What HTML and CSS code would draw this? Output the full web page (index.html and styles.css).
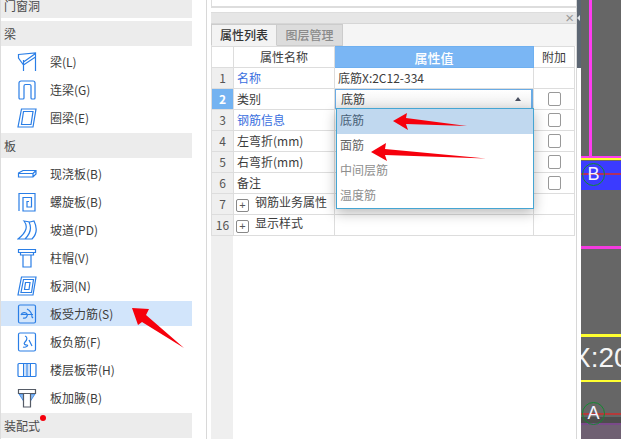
FILE: index.html
```html
<!DOCTYPE html>
<html lang="zh-CN">
<head>
<meta charset="utf-8">
<title>属性列表</title>
<link rel="stylesheet" href="styles.css">
</head>
<body>
<div class="app">
  <aside class="sidebar">
    <div class="group-head clipped">门窗洞</div>
    <div class="group-head">梁</div>
    <div class="item"><svg class="ico" viewBox="0 0 20 20"><path d="M1.500 2.500 18.500 1v4L6.500 13 1.500 6zM18.500 1.500 6.500 10M6.500 8v11M18.500 5v14"/></svg><span>梁(L)</span></div>
    <div class="item"><svg class="ico" viewBox="0 0 20 20"><path d="M3 19a1 1 0 0 1-1-1V3a2 2 0 0 1 2-2h12a2 2 0 0 1 2 2v15a1 1 0 0 1-1 1h-2a1 1 0 0 1-1-1V6a1.500 1.500 0 0 0-1.500-1.500h-4A1.500 1.500 0 0 0 7 6v12a1 1 0 0 1-1 1z"/></svg><span>连梁(G)</span></div>
    <div class="item"><svg class="ico" viewBox="0 0 20 20"><path d="M4.500 1H19l-3 18H1zM6.500 3.500H16l-2 13H4.500z"/></svg><span>圈梁(E)</span></div>
    <div class="group-head">板</div>
    <div class="item"><svg class="ico" viewBox="0 0 20 20"><path d="M1.500 9 6 6.500h13V10l-3 3H1.500zM1.500 9.500H16V13M16 9.500l3-3"/></svg><span>现浇板(B)</span></div>
    <div class="item"><svg class="ico" viewBox="0 0 20 20"><path d="M2 19V1.500h16V19H6V5.500h8.500V15H10V9.500h2"/></svg><span>螺旋板(B)</span></div>
    <div class="item"><svg class="ico" viewBox="0 0 20 20"><path d="M7 1c4 5 3 11-6 18h14c5-5 5-12 2-18l-4 1zM12 2c3 6 1 12-4 17"/></svg><span>坡道(PD)</span></div>
    <div class="item"><svg class="ico" viewBox="0 0 20 20"><path d="M1.500 1.500h17v3h-17zM3.500 4.500v2.500h13V4.500M6 7v12h8V7"/></svg><span>柱帽(V)</span></div>
    <div class="item"><svg class="ico" viewBox="0 0 20 20"><path d="M4.500 1H19l-3 18H1zM6.500 3.500H16.500l-2 13H4zM8.500 6.500h4.500l-1 7H7.500z"/></svg><span>板洞(N)</span></div>
    <div class="item active"><svg class="ico" viewBox="0 0 20 20"><rect x="1.500" y="1" width="17" height="18" rx="1.500"/><path d="M4 11c1-3 5-3 6-1s-1 5-4 4M4 10.500h12M10 5c2 1 5 4 5 8l1 1"/></svg><span>板受力筋(S)</span></div>
    <div class="item"><svg class="ico" viewBox="0 0 20 20"><rect x="1.500" y="1" width="17" height="18" rx="1.500"/><path d="M8 4c3 1 2 4 0 6s0 3 2 3-1 3-4 2M12 8c1 2 2 4 3 6"/></svg><span>板负筋(F)</span></div>
    <div class="item"><svg class="ico" viewBox="0 0 20 20"><rect class="tint" x="7" y="4" width="6" height="12"/><rect x="1" y="3.500" width="18" height="13" rx="1"/><path d="M6.500 3.500v13M13.500 3.500v13M10 4v12" class="dash"/></svg><span>楼层板带(H)</span></div>
    <div class="item"><svg class="ico" viewBox="0 0 20 20"><path class="tint2" d="M2 6h4.500v7zM18 6h-4.500v7z"/><path class="dark" d="M1.500 1.500h17v4h-17zM6.500 5.500V19h7V5.500"/></svg><span>板加腋(B)</span></div>
    <div class="group-head last">装配式<i class="dot"></i></div>
  </aside>

  <main class="panel">
    <div class="top-box"></div>
    <div class="title-bar"><span class="close">×</span></div>
    <div class="tabs">
      <div class="tab on">属性列表</div>
      <div class="tab">图层管理</div>
    </div>
    <div class="grid-wrap">
      <table class="grid">
        <colgroup><col class="c-i"><col class="c-n"><col class="c-v"><col class="c-a"></colgroup>
        <tr class="hd"><th class="idx blank"></th><th>属性名称</th><th class="val">属性值</th><th>附加</th></tr>
        <tr><td class="idx">1</td><td class="link">名称</td><td>底筋X:2C12-334</td><td></td></tr>
        <tr><td class="idx cur">2</td><td>类别</td>
          <td class="sel-cell">
            <div class="select"><span>底筋</span><i class="caret"></i></div>
            <ul class="menu">
              <li class="picked">底筋</li>
              <li>面筋</li>
              <li class="faint">中间层筋</li>
              <li class="faint">温度筋</li>
            </ul>
          </td>
          <td class="chk"><i class="box"></i></td></tr>
        <tr><td class="idx">3</td><td class="link">钢筋信息</td><td></td><td class="chk"><i class="box"></i></td></tr>
        <tr><td class="idx">4</td><td>左弯折(mm)</td><td></td><td class="chk"><i class="box"></i></td></tr>
        <tr><td class="idx">5</td><td>右弯折(mm)</td><td></td><td class="chk"><i class="box"></i></td></tr>
        <tr><td class="idx">6</td><td>备注</td><td></td><td class="chk"><i class="box"></i></td></tr>
        <tr><td class="idx">7</td><td><span class="exp">+</span>钢筋业务属性</td><td></td><td></td></tr>
        <tr><td class="idx">16</td><td><span class="exp">+</span>显示样式</td><td></td><td></td></tr>
      </table>
      <div class="rest"><div class="rest-idx"></div></div>
    </div>
  </main>

  <div class="splitter"><div class="handle"><span class="chev"></span></div></div>

  <section class="canvas">
    <i class="ln mg-v"></i>
    <i class="ln mg-h1"></i>
    <i class="ln ye-1"></i>
    <i class="ln blue"></i>
    <i class="ln red-b"></i>
    <i class="ln mg-h2"></i>
    <i class="ln ye-2"></i>
    <i class="ln ye-3"></i>
    <span class="cad-text">X:20</span>
    <i class="ln red-a"></i>
    <i class="ln strip"></i>
    <i class="ln olive"></i>
    <i class="ln floor"></i>
    <span class="axis axis-b">B</span>
    <span class="axis axis-a">A</span>
  </section>

  <svg class="arrows" viewBox="0 0 621 439">
    <path d="M132 308 149 309 146 315 184 348 142 322 138 325z"/>
    <path d="M393 121 407 113 406 118 467 126 406 124 408 130z"/>
    <path d="M371 152 386 143 385 149 486 158.500 385 155 387 161z"/>
  </svg>
</div>
</body>
</html>
```
FILE: styles.css
```css
* { box-sizing: border-box; }
html, body { margin: 0; height: 100%; }
body { font: 12px/1 "Noto Sans CJK SC", "Noto Sans", sans-serif; color: #3c3c3c; background: #fff; overflow: hidden; }

.app { position: relative; display: flex; width: 621px; height: 439px; overflow: hidden; }

/* sidebar */
.sidebar { width: 206px; flex: none; padding-right: 14px; border-left: 1px solid #ddd; }
.group-head { position: relative; height: 25px; margin-top: 3px; padding-left: 3px; background: #ececec; color: #4a4a4a; line-height: 25px; }
.group-head.clipped { margin-top: -7px; }
.item { display: flex; align-items: center; gap: 13px; height: 25px; margin-top: 3px; padding-left: 16px; }
.item + .group-head { margin-top: 3px; }
.item.active { background: #d2e5fb; }
.ico { width: 20px; height: 20px; flex: none; fill: none; stroke: #2a7ee6; stroke-width: 1.2; }
.ico .tint { fill: #cfe2fa; stroke: none; }
.ico .tint2 { fill: #8dbbf2; stroke: #2a7ee6; stroke-width: .8; }
.ico .dark { stroke: #555b66; fill: #fff; }
.ico .dash { stroke-width: 1; }
.dot { position: absolute; left: 39px; top: 2px; width: 6px; height: 6px; border-radius: 50%; background: #f5000c; }

/* property panel */
.panel { width: 371px; flex: none; display: flex; flex-direction: column; padding-left: 4px; border-left: 1px solid #d8d8d8; border-right: 1px solid #d8d8d8; }
.top-box { height: 8px; flex: none; border-left: 1px solid #ddd; border-bottom: 2px solid #ddd; }
.title-bar { display: flex; justify-content: flex-end; align-items: center; height: 12px; margin-top: 4px; flex: none; padding-right: 2px; background: #e6e6e6; border-top: 1px solid #ddd; border-bottom: 1px solid #d6d6d6; }
.close { color: #999; font: 15px/10px "Liberation Sans", sans-serif; }
.tabs { display: flex; height: 22px; flex: none; background: #f5f5f5; }
.tab { width: 66px; border: 1px solid #ccc; border-width: 1px 1px 1px 0; background: #dcdcdc; color: #8a8a8a; font-weight: 500; line-height: 20px; text-align: center; }
.tab.on { background: #f3f3f3; color: #333; border-left: 1px solid #ccc; border-bottom-color: #f3f3f3; }
.grid-wrap { flex: 1; display: flex; flex-direction: column; min-height: 0; margin-right: 1px; }
.grid { width: 363px; table-layout: fixed; border-collapse: collapse; flex: none; background: #fff; }
.c-i { width: 22px; } .c-n { width: 101px; } .c-v { width: 199px; } .c-a { width: 41px; }
.grid th, .grid td { height: 21px; padding: 0 0 0 3px; border: 1px solid #ddd; font-weight: 400; color: #3c3c3c; white-space: nowrap; text-align: left; }
.grid th { text-align: center; padding: 0; }
.grid .hd th { height: 21px; }
.grid th.val { background: #7ab6f4; color: #fff; font-weight: 500; font-size: 13px; border-color: #6fb0f0; }
.grid .idx { background: #efefef; text-align: center; padding: 0; color: #555; }
.grid .idx.blank { background: #fff; }
.grid .idx.cur { background: #74b3f1; color: #fff; font-weight: 700; }
.grid td.link { color: #3a6fe0; }
.grid .chk { padding: 0; text-align: center; }
.box { display: block; width: 13px; height: 14px; margin: 0 auto; border: 1px solid #999; border-radius: 2px; background: #fff; }
.exp { display: inline-block; width: 13px; height: 13px; margin: 0 6px 0 -1px; border: 1px solid #888; border-radius: 2px; color: #555; font: 11px/10px "Liberation Sans", sans-serif; text-align: center; vertical-align: -2px; }
.grid .sel-cell { position: relative; padding: 0; }
.select { display: flex; align-items: center; justify-content: space-between; height: 20px; padding: 0 10px 0 5px; border: 1.500px solid #6aabe4; border-right-width: 2px; background: linear-gradient(#fff, #eee); }
.caret { width: 0; height: 0; border: 3px solid transparent; border-top: 0; border-bottom: 4px solid #4a5060; }
.menu { position: absolute; left: 1px; top: 19px; width: 198px; height: 101px; margin: 0; padding: 0; list-style: none; border: 1px solid #45a5d3; background: #fff; box-shadow: 0 4px 12px rgba(0,0,0,.28); z-index: 2; }
.menu li { height: 25px; padding-left: 3px; color: #666; line-height: 22px; }
.menu .picked { background: #c0d8ef; color: #4a6178; }
.menu .faint { color: #8e8e8e; }
.rest { flex: 1; display: flex; }
.rest-idx { width: 22px; background: #efefef; }

/* splitter */
.splitter { width: 4px; flex: none; }
.handle { display: flex; align-items: center; height: 68px; background: #5c6673; padding: 0 0 32px 0; }
.chev { width: 0; height: 0; border: 3px solid transparent; border-left: 0; border-right: 3px solid #dfe3e8; }

/* drawing canvas */
.canvas { position: relative; flex: 1; background: #666; overflow: hidden; }
.ln { position: absolute; left: 0; right: 0; display: block; }
.mg-v { left: 8px; right: auto; top: 0; width: 3px; height: 157px; background: #ff3cf0; }
.mg-h1 { top: 156px; height: 2px; background: #ff3cf0; }
.ye-1 { top: 158px; height: 2px; background: #ffff30; }
.blue { top: 161px; height: 29px; background: #3b3bff; }
.red-b { top: 173px; height: 2px; background: #b03060; }
.mg-h2 { top: 246px; height: 3px; background: #f43be0; }
.ye-2 { top: 334px; height: 3px; background: #ffff30; }
.ye-3 { top: 380px; height: 2px; background: #ffff30; }
.red-a { top: 413px; height: 2px; background: #b53a3a; }
.strip { top: 417px; height: 6px; background: #4d4d4d; }
.olive { top: 423px; height: 2px; background: #7a4a8a; }
.floor { top: 425px; bottom: 0; background: #6f6072; }
.cad-text { position: absolute; left: -9px; top: 343px; color: #f5f5f5; font: 28px/30px "Liberation Sans", sans-serif; white-space: nowrap; }
.axis { position: absolute; left: 1px; width: 23px; height: 23px; border: 1px solid #128a30; border-radius: 50%; color: #f4f4ff; font: 18px/21px "Liberation Sans", sans-serif; text-align: center; }
.axis-b { top: 163px; }
.axis-a { top: 402px; }

/* annotation arrows */
.arrows { position: absolute; left: 0; top: 0; width: 621px; height: 439px; fill: #f6000c; pointer-events: none; z-index: 5; }
```
